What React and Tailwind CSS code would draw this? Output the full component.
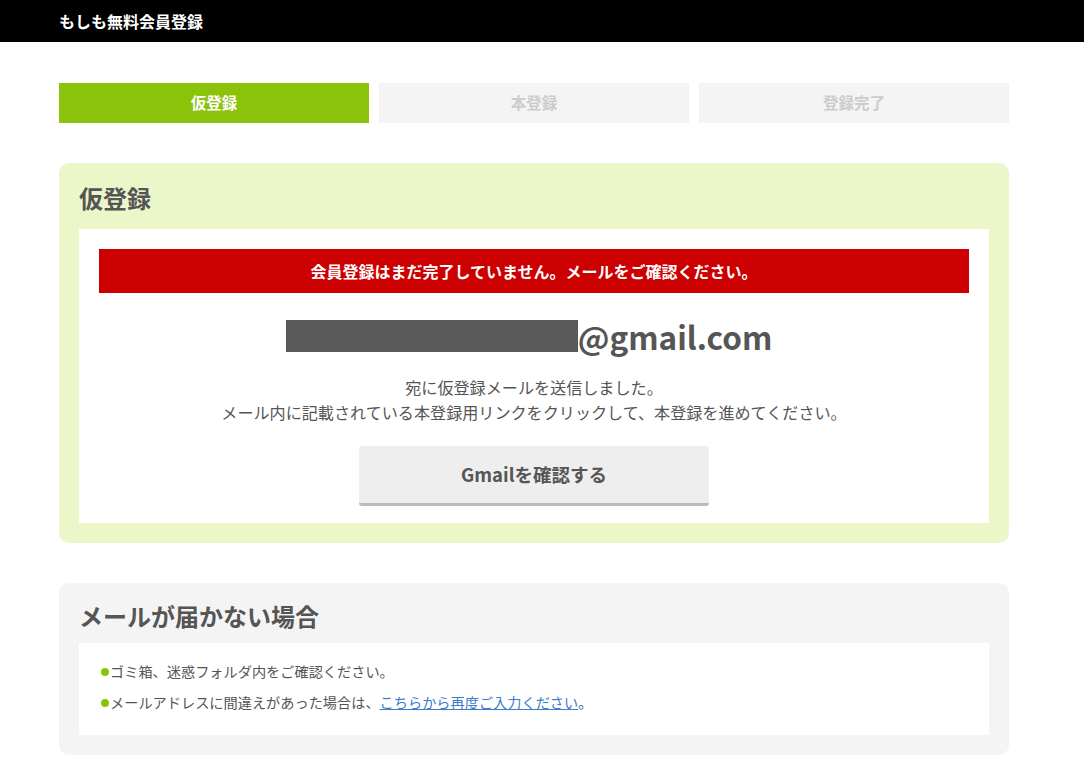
import React from 'react';

const font = { fontFamily: '"Noto Sans CJK JP", "Noto Sans", sans-serif' };

const steps = [
  { label: '仮登録', active: true },
  { label: '本登録', active: false },
  { label: '登録完了', active: false },
];

const StepBar = () => (
  <div className="grid grid-cols-3 gap-[10px]">
    {steps.map((step) => (
      <div
        key={step.label}
        className={
          step.active
            ? 'h-[40px] flex items-center justify-center bg-[#8bc20a] text-white font-bold text-[15.5px]'
            : 'h-[40px] flex items-center justify-center bg-[#f4f4f4] text-[#cccccc] font-bold text-[15.5px]'
        }
      >
        {step.label}
      </div>
    ))}
  </div>
);

const App = () => {
  return (
    <div className="min-h-screen bg-white text-[#555555]" style={font}>
      <header className="h-[42px] bg-black flex items-center">
        <div className="ml-[59px] text-white font-bold text-[16px]">もしも無料会員登録</div>
      </header>

      <main className="ml-[59px] w-[950px] pt-[41px] pb-[23px] flex flex-col gap-[40px]">
        <StepBar />

        <section className="bg-[#ebf6c9] rounded-[10px] p-[20px]">
          <h2 className="text-[24px] font-bold leading-[30px] mb-[16px]">仮登録</h2>
          <div className="bg-white px-[20px] pt-[20px] pb-[17px] flex flex-col items-center">
            <div className="w-full h-[44px] bg-[#cc0000] text-white font-bold text-[16px] flex items-center justify-center">
              会員登録はまだ完了していません。メールをご確認ください。
            </div>
            <div className="mt-[23px] h-[40px] pr-[10px] flex items-center">
              <span className="inline-block w-[292px] h-[32px] bg-[#595959]" />
              <span className="text-[31.5px] font-bold leading-[40px]">@gmail.com</span>
            </div>
            <p className="mt-[19px] text-[16.1px] leading-[25px] text-center">
              宛に仮登録メールを送信しました。
              <br />
              メール内に記載されている本登録用リンクをクリックして、本登録を進めてください。
            </p>
            <button
              type="button"
              className="mt-[21px] w-[350px] h-[60px] bg-[#eeeeee] border-b-[3px] border-[#bbbbbb] rounded-[3px] text-[18.5px] font-bold text-[#555555]"
            >
              Gmailを確認する
            </button>
          </div>
        </section>

        <section className="bg-[#f4f4f4] rounded-[10px] p-[20px]">
          <h2 className="text-[24px] font-bold leading-[26px] mb-[14px]">メールが届かない場合</h2>
          <ul className="bg-white pl-[22px] pt-[18px] pb-[22px] flex flex-col gap-[10px] text-[14.2px] leading-[21px]">
            <li className="flex items-center">
              <span className="w-[8px] h-[8px] rounded-full bg-[#8bc20a] mr-[1px]" />
              ゴミ箱、迷惑フォルダ内をご確認ください。
            </li>
            <li className="flex items-center">
              <span className="w-[8px] h-[8px] rounded-full bg-[#8bc20a] mr-[1px]" />
              メールアドレスに間違えがあった場合は、
              <a href="#" className="text-[#3a7cc8] underline">こちらから再度ご入力ください</a>
              。
            </li>
          </ul>
        </section>
      </main>
    </div>
  );
};

export default App;
